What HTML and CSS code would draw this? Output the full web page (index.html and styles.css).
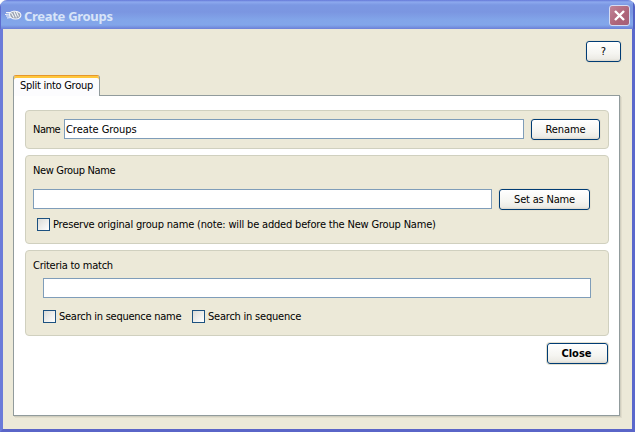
FILE: index.html
```
<!DOCTYPE html>
<html lang="en">
<head>
<meta charset="utf-8">
<title>Create Groups</title>
<link rel="stylesheet" href="styles.css">
</head>
<body>
<div class="window">
  <header class="titlebar">
    <svg class="logo" width="17" height="11" viewBox="0 0 17 11" fill="none" stroke="#f4f6fa" stroke-width="1.100">
      <path d="M4.500 5C4.500 .5 12 .3 15 3C17.500 6.500 14 9 10.500 9C7 9 5 7.500 4.500 5Z" fill="#9ba3b2"/>
      <path d="M5 2.500H1M4.500 4L0 4.500M5.500 6H1M6.500 7.500L2 8M6.500 3L9 7.500M9 2L11.500 7.500M11.500 2L13.500 6.500"/>
    </svg>
    <h1 class="title"><span class="t-title">Create Groups</span></h1>
    <button class="win-close" aria-label="Close window">
      <svg width="11" height="11" viewBox="0 0 11 11"><path d="M1 1L10 10M10 1L1 10" stroke="#fff" stroke-width="2.400"/></svg>
    </button>
  </header>
  <main class="content">
    <div class="help-row"><button class="btn btn-help">?</button></div>
    <div class="tab"><span class="t-tab">Split into Group</span></div>
    <section class="panel">
      <div class="group group-name">
        <label class="t-name" for="name">Name</label>
        <input id="name" class="field t-field" value="Create Groups">
        <button class="btn btn-rename"><span class="t-rename">Rename</span></button>
      </div>
      <div class="group group-new">
        <div class="heading"><span class="t-new">New Group Name</span></div>
        <div class="new-row">
          <input class="field">
          <button class="btn btn-set"><span class="t-set">Set as Name</span></button>
        </div>
        <label class="check check-preserve"><i class="box"></i><span class="t-preserve">Preserve original group name (note: will be added before the New Group Name)</span></label>
      </div>
      <div class="group group-criteria">
        <div class="heading"><span class="t-criteria">Criteria to match</span></div>
        <input class="field criteria">
        <div class="checks">
          <label class="check check-first"><i class="box"></i><span class="t-seqname">Search in sequence name</span></label>
          <label class="check"><i class="box"></i><span class="t-seq">Search in sequence</span></label>
        </div>
      </div>
      <div class="actions"><button class="btn btn-close"><span class="t-close">Close</span></button></div>
    </section>
  </main>
</div>
</body>
</html>
```
FILE: styles.css
```
* { box-sizing: border-box; }
body {
  margin: 0;
  background: #fff;
  color: #000;
  font: 11px/14px "DejaVu Sans Condensed", "DejaVu Sans", sans-serif;
  font-stretch: condensed;
}
button, input { font: inherit; color: inherit; margin: 0; }
span, label { white-space: nowrap; }
.window {
  width: 635px;
  height: 432px;
  display: flex;
  flex-direction: column;
  background: #ece9d8;
  border-radius: 7px 7px 0 0;
  overflow: hidden;
}
.titlebar {
  flex: none;
  height: 29px;
  padding: 2px 5px 0 5px;
  display: flex;
  align-items: center;
  background: linear-gradient(#6478d8 0, #8da9ee 2px, #7b98e3 5px, #7b96e1 12px, #82a5e9 20px, #82a6ea 25px, #7189db 28px, #6d80d8 29px);
  box-shadow: inset 1px 0 #5c6bd0, inset -2px 0 #5261c4;
}
.logo { flex: none; }
.title {
  flex: 1;
  margin: 0 0 0 2px;
  font: bold 13px/18px "Noto Sans", sans-serif;
  color: #d8e4f8;
}
.win-close {
  width: 21px;
  height: 21px;
  padding: 0;
  display: grid;
  place-items: center;
  border: 1px solid #d5dcf3;
  border-radius: 3px;
  background: linear-gradient(135deg, #c08397, #ae6479 60%, #a45f78);
}
.content {
  flex: 1;
  padding: 12px 12px 13px 10px;
  border: solid #6b7bd9;
  border-width: 0 3px 3px;
  border-bottom-color: #5a65c8;
  border-right-color: #5a68cc;
}
.help-row { display: flex; justify-content: flex-end; height: 34px; margin-right: -1px; }
.btn {
  flex: none;
  height: 21px;
  padding: 0;
  border: 1px solid #003c74;
  border-radius: 3px;
  background: linear-gradient(#fff, #f5f5f1 60%, #ecebe5 90%, #d9d5ca);
  box-shadow: 0 0 0 1px #e5e1d0;
  text-align: center;
  line-height: 18px;
}
.btn-help { width: 35px; }
.tab {
  position: relative;
  z-index: 1;
  width: 87px;
  height: 21px;
  padding: 3px 0 0 6px;
  border: 1px solid #919b9c;
  border-top: 1px solid #e5972d;
  border-bottom: 0;
  border-radius: 3px 3px 0 0;
  background: #fcfcfe;
  box-shadow: inset 0 2px #ffc73c;
  line-height: 14px;
  margin-bottom: -1px;
}
.panel {
  width: 607px;
  height: 321px;
  padding: 14px 10px 0 11px;
  border: 1px solid #919b9c;
  background: #fff;
  box-shadow: 1px 1px #d0cebf, 2px 2px #e1ddcc;
}
.group {
  width: 584px;
  margin-bottom: 6px;
  border: 1px solid #d0d0bf;
  border-radius: 4px;
  background: #ece9d8;
}
.group-name { height: 39px; display: flex; align-items: flex-start; padding: 8px 8px 0 7px; }
.group-name label { width: 31px; line-height: 21px; }
.field {
  display: block;
  height: 20px;
  padding: 0 1px;
  border: 1px solid #7f9db9;
  border-radius: 0;
  background: #fff;
  outline: 0;
  flex: 1;
  min-width: 0;
}
.btn-rename { width: 69px; margin-left: 7px; }
.group-new { height: 89px; padding: 8px 18px 0 7px; }
.heading { height: 14px; }
.new-row { display: flex; margin-top: 11px; }
.btn-set { width: 91px; margin-left: 7px; }
.check { display: flex; align-items: center; height: 13px; line-height: 13px; }
.box {
  width: 13px;
  height: 13px;
  margin-right: 3px;
  border: 1px solid #1c5180;
  background: linear-gradient(135deg, #dcdcd7, #fff);
}
.check-preserve { margin: 8px 0 0 4px; }
.group-criteria { height: 86px; padding: 8px 17px 0; }
.group-criteria .heading { margin-left: -10px; }
.criteria { width: 548px; margin-top: 5px; }
.checks { display: flex; margin-top: 12px; }
.check-first { width: 149px; }
.actions { display: flex; justify-content: flex-end; padding: 1px 1px 0 0; }
.btn-close { width: 61px; padding-right: 2px; font-weight: bold; }

/* per-label tracking */
.t-title { letter-spacing: -.3px; }
.t-tab { letter-spacing: -.27px; }
.t-name { letter-spacing: -.5px; }
.t-field { letter-spacing: -.05px; }
.t-rename { letter-spacing: -.1px; }
.t-new { letter-spacing: -.35px; }
.t-set { letter-spacing: -.2px; }
.t-preserve { letter-spacing: -.18px; }
.t-criteria { letter-spacing: -.25px; }
.t-seqname { letter-spacing: -.26px; }
.t-seq { letter-spacing: -.22px; }
```
